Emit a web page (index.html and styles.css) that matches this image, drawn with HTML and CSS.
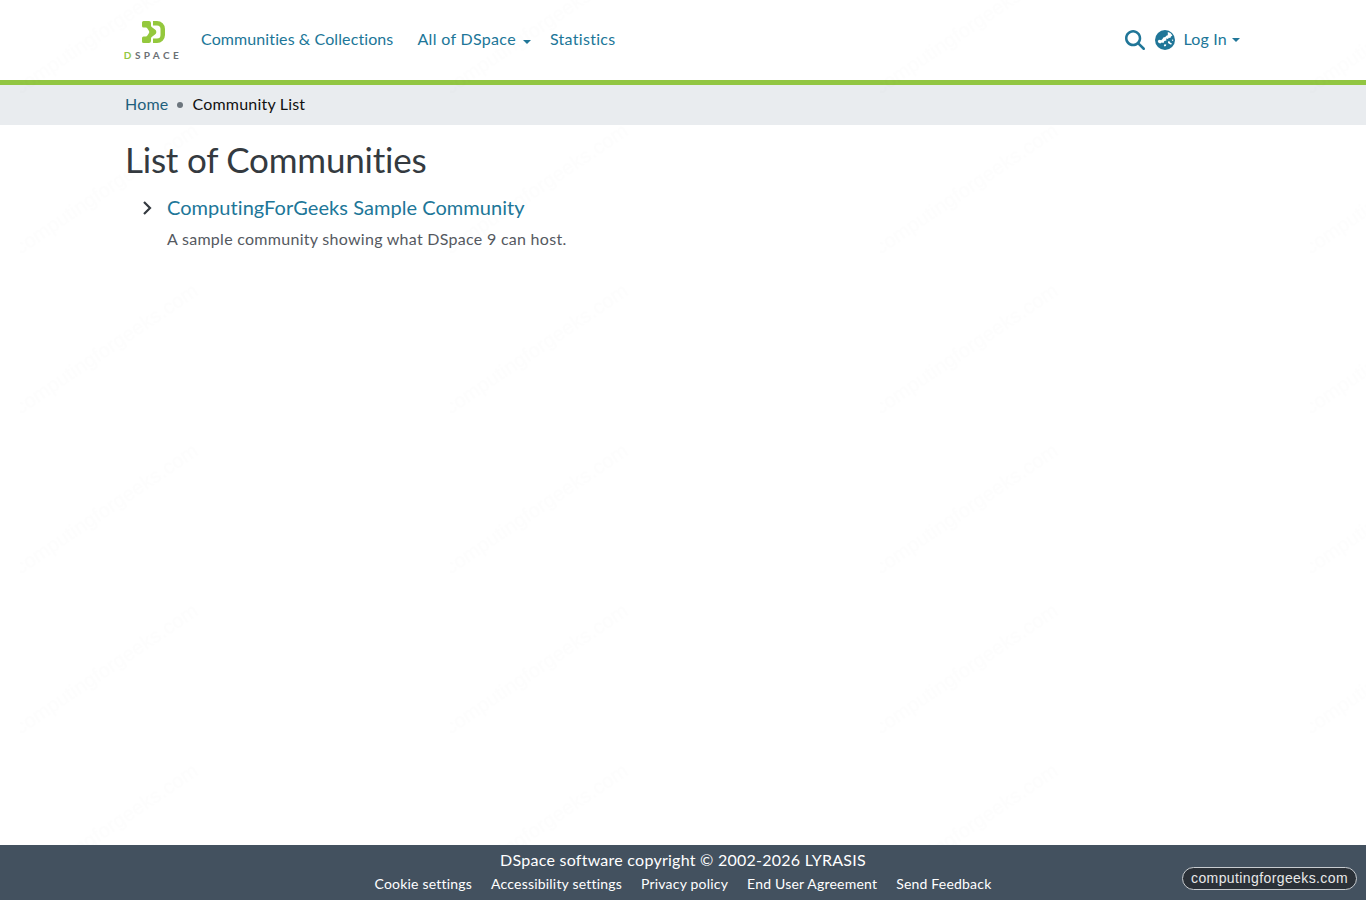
FILE: index.html
```html
<!DOCTYPE html>
<html lang="en">
<head>
<meta charset="utf-8">
<title>List of Communities</title>
<link rel="stylesheet" href="styles.css">
</head>
<body>
<header class="site-header">
  <div class="container header-row">
    <a class="logo" href="#">
      <svg class="logo-mark" viewBox="0 0 23 22" width="23" height="22">
        <path fill="#94c83d" d="M1.500 0H7a2 2 0 0 1 2 2V4.500a2 2 0 0 0 1 1.800l3 2.200a3 3 0 0 1 0 5l-3 2.200a2 2 0 0 0-1 1.800V20a2 2 0 0 1-2 2H1.500A1.500 1.500 0 0 1 0 20.500V17a1.500 1.500 0 0 1 1.500-1.500H4a1.500 1.500 0 0 0 1.200-.7l1.500-2.200a2.500 2.500 0 0 0 0-3.200L5.200 7.200A1.500 1.500 0 0 0 4 6.500H1.500A1.500 1.500 0 0 1 0 5V1.500A1.500 1.500 0 0 1 1.500 0z"/>
        <path fill="#94c83d" d="M11 0H15A8 8 0 0 1 23 8V14A8 8 0 0 1 15 22H11V17.500H15A3.500 3.500 0 0 0 18.500 14V8A3.500 3.500 0 0 0 15 4.500H11z"/>
      </svg>
      <span class="logo-word"><span class="logo-d">D</span>SPACE</span>
    </a>
    <nav class="main-nav">
      <a href="#">Communities &amp; Collections</a>
      <a href="#" class="nav-dd">All of DSpace<span class="caret"></span></a>
      <a href="#" class="nav-stats">Statistics</a>
    </nav>
    <div class="header-tools">
      <svg class="icon-search" viewBox="0 0 512 512" width="20" height="20"><path fill="#207698" d="M416 208c0 45.900-14.900 88.300-40 122.700L502.600 457.400c12.500 12.500 12.500 32.800 0 45.300s-32.800 12.500-45.300 0L330.700 376c-34.400 25.200-76.800 40-122.700 40C93.100 416 0 322.900 0 208S93.100 0 208 0S416 93.100 416 208zM208 352a144 144 0 1 0 0-288 144 144 0 1 0 0 288z"/></svg>
      <svg class="icon-globe" viewBox="0 0 20 20" width="20" height="20">
        <circle cx="10" cy="10" r="10" fill="#207698"/>
        <path fill="#fff" d="M12.800 1.900l2.600 1.100 2 2.500-1.400 1-.7 1.500-1.500-.3-.8 1.400-1.800-.6.200 1.900-2 .7-1 1.800-1.600-.3-1.600 1-1.700-.8-.8-1.800 1.300-1.200 2.200.5 1.300-1.300.8-1.500 1.900-.4 1.500-1.700 1.100-.2z"/>
        <path fill="#fff" d="M13 11.200l1.800.2.500 1.400 1.500.5-.6 1.400-1.700-.8-1.500-1zM9.600 14.300l1.700.2-.4 1.500-1.400.4-.7-1.100zM16.800 9.800l1.300-.2.200 1-1.100.5z"/>
      </svg>
      <a href="#" class="login">Log In<span class="caret caret-login"></span></a>
    </div>
  </div>
</header>
<div class="breadcrumb-bar">
  <div class="container crumbs">
    <a href="#">Home</a>
    <span class="dot"></span>
    <span class="current">Community List</span>
  </div>
</div>
<main class="container content">
  <h1>List of Communities</h1>
  <div class="tree-row">
    <svg class="chev" viewBox="0 0 10 16" width="10" height="16"><path d="M2 2l6 6-6 6" fill="none" stroke="#343a40" stroke-width="2.200"/></svg>
    <div class="tree-body">
      <a class="tree-title" href="#">ComputingForGeeks Sample Community</a>
      <p class="tree-desc">A sample community showing what DSpace 9 can host.</p>
    </div>
  </div>
</main>
<footer class="site-footer">
  <p class="copyright">DSpace software copyright © 2002-2026 LYRASIS</p>
  <ul class="foot-links">
    <li><a href="#">Cookie settings</a></li>
    <li><a href="#">Accessibility settings</a></li>
    <li><a href="#">Privacy policy</a></li>
    <li><a href="#">End User Agreement</a></li>
    <li><a href="#">Send Feedback</a></li>
  </ul>
  <span class="badge">computingforgeeks.com</span>
</footer>
<svg class="watermark" width="1366" height="900" aria-hidden="true">
  <defs>
    <text id="wm" class="wm-text" transform="rotate(-34)">computingforgeeks.com</text>
    <pattern id="wm-tile" width="430" height="160" patternUnits="userSpaceOnUse" x="20" y="95">
      <use href="#wm" x="0" y="0"/>
      <use href="#wm" x="0" y="160"/>
      <use href="#wm" x="-430" y="0"/>
      <use href="#wm" x="-430" y="160"/>
    </pattern>
  </defs>
  <rect width="1366" height="845" fill="url(#wm-tile)"/>
</svg>
</body>
</html>
```
FILE: styles.css
```css
* { box-sizing: border-box; }
html, body { margin: 0; height: 900px; }
body {
  position: relative;
  display: flex;
  flex-direction: column;
  font-family: "Lato", "Noto Sans", sans-serif;
  font-size: 16px;
  font-variant-ligatures: none;
  letter-spacing: .2px;
  color: #343a40;
  background: #fff;
  overflow: hidden;
}
a { color: #207698; text-decoration: none; }
.container { width: 1140px; margin: 0 auto; padding: 0 12px; }
.site-header { height: 85px; border-bottom: 5px solid #92c642; background: #fff; flex: none; }
.header-row { display: flex; align-items: center; height: 80px; }
.logo { display: flex; flex-direction: column; align-items: center; width: 56px; gap: 8px; margin-top: 1px; }
.logo-mark { display: block; }
.logo-word { font-size: 10px; font-weight: 700; letter-spacing: 3.400px; line-height: 9px; color: #6c7075; white-space: nowrap; }
.logo-d { color: #92c642; }
.main-nav { display: flex; align-items: center; margin-left: 20px; padding-bottom: 4px; letter-spacing: .1px; }
.main-nav a { display: block; white-space: nowrap; }
.nav-dd { margin-left: 24px; margin-right: 19px; letter-spacing: .33px; }
.nav-stats { letter-spacing: .3px; }
.caret { display: inline-block; width: 0; height: 0; margin-left: 7px; border-top: 4.800px solid #207698; border-left: 4.800px solid transparent; border-right: 4.800px solid transparent; vertical-align: 1px; }
.header-tools { display: flex; align-items: center; margin-left: auto; padding-right: 1px; }
.icon-search { display: block; }
.icon-globe { display: block; margin-left: 10px; }
.login { margin-left: 8px; white-space: nowrap; padding-bottom: 4px; }
.caret-login { margin-left: 5px; vertical-align: 3px; }
.breadcrumb-bar { height: 40px; background: #e9ecef; flex: none; }
.crumbs { display: flex; align-items: center; height: 40px; padding-bottom: 4px; }
.crumbs a { color: #1f5f7c; }
.dot { width: 6px; height: 6px; border-radius: 50%; background: #6c757d; margin: 4px 9px 0 9px; }
.current { color: #111; }
.content { flex: 1; padding-top: 13px; }
h1 { margin: 0; font-size: 35px; line-height: 42px; font-weight: 400; color: #343a40; letter-spacing: -.22px; }
.tree-row { display: flex; margin-top: 12px; padding-left: 17px; }
.chev { margin-top: 8px; flex: none; }
.tree-body { margin-left: 15px; }
.tree-title { display: block; font-size: 20px; line-height: 30px; letter-spacing: .05px; }
.tree-desc { margin: 5px 0 0; line-height: 24px; color: #55595f; letter-spacing: .28px; }
.site-footer { position: relative; height: 55px; flex: none; background: #43515f; color: #fff; text-align: center; padding-top: 3px; }
.copyright { margin: 0; line-height: 24px; letter-spacing: .25px; }
.foot-links { display: flex; justify-content: center; gap: 19px; list-style: none; margin: 0; padding: 0; font-size: 14px; line-height: 24px; }
.foot-links a { color: #fff; }
.badge { position: absolute; left: 1182px; top: 22px; width: 175px; height: 23px; border: 1px solid #c8ccd0; border-radius: 12px; background: #2b3138; color: #e8e8e8; font-family: "Liberation Sans", sans-serif; font-size: 14px; letter-spacing: .4px; line-height: 20px; text-align: center; }
.watermark { position: absolute; left: 0; top: 0; pointer-events: none; }
.wm-text { font-family: "Liberation Sans", sans-serif; font-size: 20px; fill: #000; fill-opacity: .006; }
```
